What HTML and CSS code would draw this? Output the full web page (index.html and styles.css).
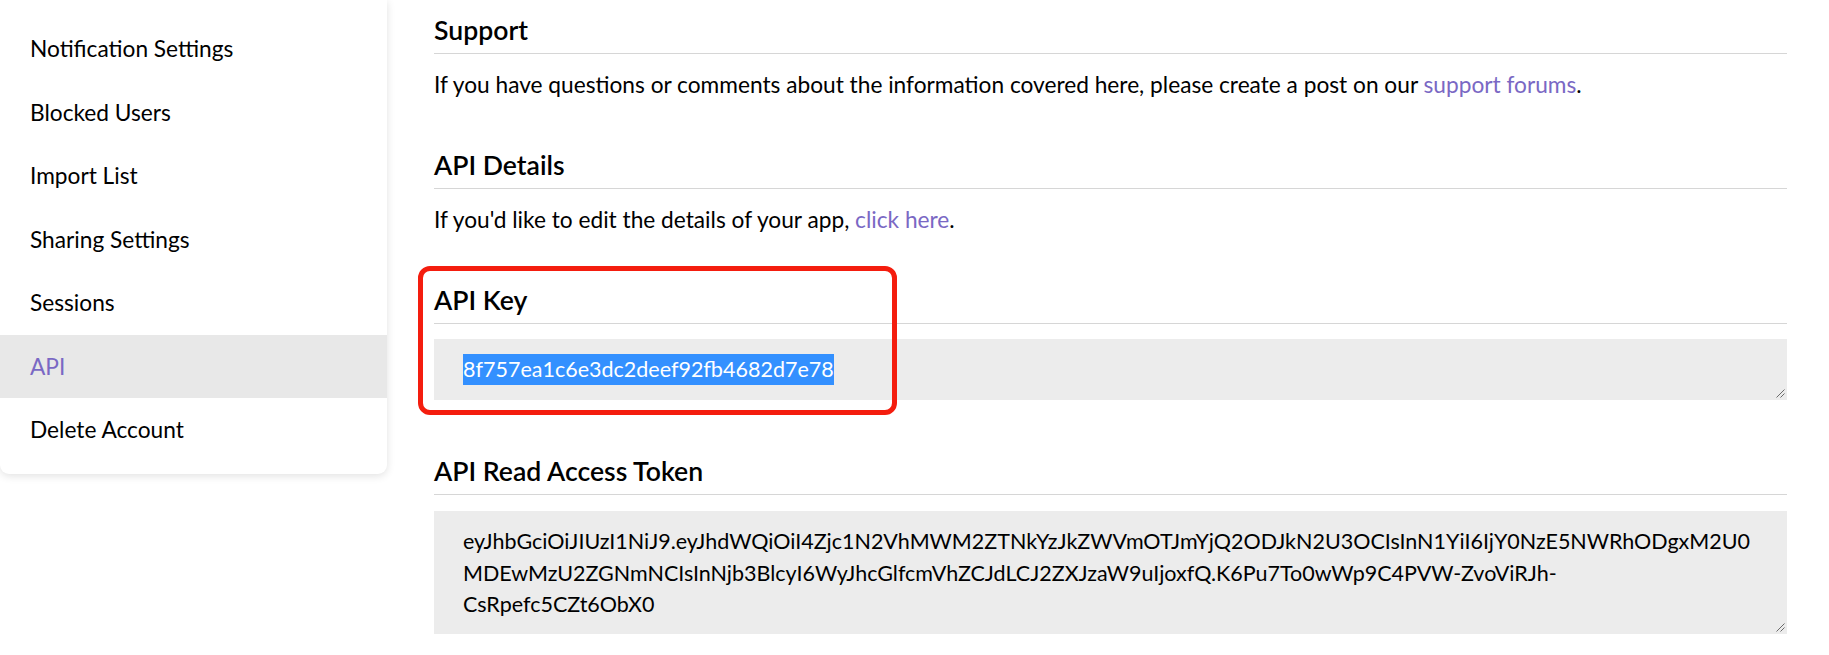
FILE: index.html
```html
<!DOCTYPE html>
<html lang="en">
<head>
<meta charset="utf-8">
<title>API Settings</title>
<link rel="stylesheet" href="styles.css">
</head>
<body>
<div class="page">
  <aside class="sidebar">
    <nav class="menu">
      <a class="menu-item" href="#">Notification Settings</a>
      <a class="menu-item" href="#">Blocked Users</a>
      <a class="menu-item" href="#">Import List</a>
      <a class="menu-item" href="#">Sharing Settings</a>
      <a class="menu-item" href="#">Sessions</a>
      <a class="menu-item active" href="#">API</a>
      <a class="menu-item" href="#">Delete Account</a>
    </nav>
  </aside>
  <main class="content">
    <section class="section">
      <h2 class="section-title">Support</h2>
      <p class="section-text">If you have questions or comments about the information covered here, please create a post on our <a class="link" href="#">support forums</a>.</p>
    </section>
    <section class="section">
      <h2 class="section-title">API Details</h2>
      <p class="section-text">If you'd like to edit the details of your app, <a class="link" href="#">click here</a>.</p>
    </section>
    <section class="section key-section">
      <h2 class="section-title">API Key</h2>
      <div class="field field-key"><span class="selected">8f757ea1c6e3dc2deef92fb4682d7e78</span><svg class="grip" width="10" height="10" viewBox="0 0 10 10"><path d="M9.5 1.5 L1.5 9.5 M9.5 5.5 L5.5 9.5" stroke="#6b6b6b" stroke-width="1" fill="none"/></svg></div>
      <div class="annotation"></div>
    </section>
    <section class="section">
      <h2 class="section-title">API Read Access Token</h2>
      <div class="field field-token"><span class="token-line">eyJhbGciOiJIUzI1NiJ9.eyJhdWQiOiI4Zjc1N2VhMWM2ZTNkYzJkZWVmOTJmYjQ2ODJkN2U3OCIsInN1YiI6IjY0NzE5NWRhODgxM2U0</span><span class="token-line">MDEwMzU2ZGNmNCIsInNjb3BlcyI6WyJhcGlfcmVhZCJdLCJ2ZXJzaW9uIjoxfQ.K6Pu7To0wWp9C4PVW-ZvoViRJh-</span><span class="token-line">CsRpefc5CZt6ObX0</span><svg class="grip" width="10" height="10" viewBox="0 0 10 10"><path d="M9.5 1.5 L1.5 9.5 M9.5 5.5 L5.5 9.5" stroke="#6b6b6b" stroke-width="1" fill="none"/></svg></div>
    </section>
  </main>
</div>
</body>
</html>
```

FILE: styles.css
```css
html, body {
  margin: 0;
  padding: 0;
  background: #ffffff;
}
body {
  width: 1829px;
  height: 655px;
  overflow: hidden;
  font-family: "Lato", "Liberation Sans", sans-serif;
  font-size: 22.7px;
  color: #000000;
}
.page {
  display: flex;
  align-items: flex-start;
}
.sidebar {
  width: 387px;
  flex: 0 0 387px;
  background: #ffffff;
  border-radius: 0 0 9px 9px;
  box-shadow: 0 2px 8px rgba(0, 0, 0, 0.12);
  padding: 17px 0 12px;
  box-sizing: border-box;
}
.menu {
  display: flex;
  flex-direction: column;
}
.menu-item {
  display: flex;
  align-items: center;
  height: 63.5px;
  padding-left: 30px;
  color: #000000;
  text-decoration: none;
  font-size: 22.7px;
}
.menu-item.active {
  background: #e8e8e8;
  color: #7a68c4;
}
.content {
  flex: 0 0 1353px;
  width: 1353px;
  margin-left: 47px;
  padding-top: 15px;
  display: flex;
  flex-direction: column;
  gap: 50px;
}
.section {
  display: flex;
  flex-direction: column;
}
.section-title {
  margin: 0;
  font-size: 26.6px;
  line-height: 30px;
  font-weight: 600;
  padding-bottom: 8px;
  border-bottom: 1px solid #d6d6d6;
}
.section-text {
  margin: 16px 0 0;
  line-height: 30px;
}
.link {
  color: #7a68c4;
  text-decoration: none;
}
.key-section {
  position: relative;
  margin-bottom: 6px;
}
.field {
  position: relative;
  margin-top: 15px;
  background: #ececec;
  box-sizing: border-box;
  padding-left: 29px;
  font-size: 21.5px;
}
.field-key {
  height: 61px;
  padding-top: 15px;
  line-height: 31px;
}
.selected {
  background: #3390ff;
  color: #ffffff;
  display: inline-block;
}
.field-token {
  margin-top: 16px;
  height: 123px;
  padding-top: 15px;
  line-height: 31.5px;
  display: flex;
  flex-direction: column;
}
.token-line {
  white-space: nowrap;
}
.grip {
  position: absolute;
  right: 2px;
  bottom: 2px;
}
.annotation {
  position: absolute;
  left: -16px;
  top: -19px;
  width: 479px;
  height: 149px;
  box-sizing: border-box;
  border: 5px solid #f41d0e;
  border-radius: 12px;
  pointer-events: none;
}
```
